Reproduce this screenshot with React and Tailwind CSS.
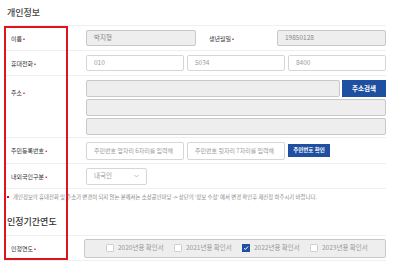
// 개인정보 form (screenshot recreation)
const font = { fontFamily: '"Noto Sans CJK KR", "Noto Sans", sans-serif' };

const Req = () => <span className="text-[#e60012] ml-[1px]">•</span>;

const Label = ({ children, w = "w-[82px]", top = false }) => (
  <div className={`${w} shrink-0 pl-[7px] text-[6px] text-[#333] ${top ? "self-start pt-[8px]" : ""}`}>
    {children}
    <Req />
  </div>
);

const Input = ({ value, placeholder, disabled, w = "w-[98px]", h = "h-[17px]" }) => (
  <div
    className={`${w} ${h} shrink-0 flex items-center px-[7px] rounded-[2px] border whitespace-nowrap overflow-hidden ${
      placeholder ? "text-[6px]" : "text-[6.5px]"
    } ${disabled ? "bg-[#eeeeee] border-[#c8c8c8] text-[#888]" : "bg-white border-[#d6d6d6] text-[#999]"}`}
  >
    {value || placeholder}
  </div>
);

const Check = ({ year, checked }) => (
  <div className="flex items-center w-[68px] shrink-0">
    {checked ? (
      <div className="w-[8px] h-[8px] bg-[#1f4fa0] flex items-center justify-center">
        <svg width="6" height="6" viewBox="0 0 6 6">
          <path d="M1 3.2 L2.4 4.5 L5 1.5" stroke="white" strokeWidth="1" fill="none" />
        </svg>
      </div>
    ) : (
      <div className="w-[8px] h-[8px] bg-white border border-[#d0d0d0] rounded-[1px]" />
    )}
    <span className="ml-[4px] text-[6.5px] text-[#999] whitespace-nowrap">{year}년용 확인서</span>
  </div>
);

export default function App() {
  return (
    <div className="relative w-[399px] h-[272px] bg-white overflow-hidden" style={font}>
      <div className="h-[25px] flex items-center pl-[7px] text-[9px] text-[#444] font-medium">개인정보</div>

      <div className="ml-[4px] w-[382px]">
        {/* 이름 / 생년월일 */}
        <div className="h-[25px] flex items-center border-t border-[#efefef]">
          <Label>이름</Label>
          <Input value="박지형" disabled w="w-[110px]" h="h-[16px]" />
          <div className="w-[6px]" />
          <Label w="w-[75px]">생년월일</Label>
          <Input value="19850128" disabled w="w-[109px]" h="h-[16px]" />
        </div>

        {/* 휴대전화 */}
        <div className="h-[25px] flex items-center gap-[3px] border-t border-[#efefef]">
          <div className="-mr-[3px] flex"><Label>휴대전화</Label></div>
          <Input value="010" h="h-[16px]" />
          <Input value="5034" h="h-[16px]" />
          <Input value="8400" h="h-[16px]" />
        </div>

        {/* 주소 */}
        <div className="h-[62px] flex items-start pt-[4px] border-t border-[#efefef]">
          <Label top>주소</Label>
          <div className="flex flex-col gap-[2px]">
            <div className="flex gap-[2px]">
              <Input disabled w="w-[254px]" />
              <div className="w-[44px] h-[17px] bg-[#1f4fa0] text-white text-[6.5px] font-bold flex items-center justify-center">
                주소검색
              </div>
            </div>
            <Input disabled w="w-[300px]" />
            <Input disabled w="w-[300px]" />
          </div>
        </div>

        {/* 주민등록번호 */}
        <div className="h-[26px] flex items-center gap-[3px] border-t border-[#efefef]">
          <div className="-mr-[3px] flex"><Label>주민등록번호</Label></div>
          <Input placeholder="주민번호 앞자리 6자리를 입력해" h="h-[18px]" />
          <Input placeholder="주민번호 뒷자리 7자리를 입력해" h="h-[18px]" />
          <div className="w-[42px] h-[13px] bg-[#1f4fa0] text-white text-[5.5px] font-bold flex items-center justify-center whitespace-nowrap">
            주민번호 확인
          </div>
        </div>

        {/* 내외국인구분 */}
        <div className="h-[25px] flex items-center border-t border-[#efefef]">
          <Label>내외국인구분</Label>
          <div className="w-[61px] h-[17px] flex items-center justify-between px-[7px] rounded-[2px] border border-[#d6d6d6] text-[6.5px] text-[#999]">
            <span>내국인</span>
            <svg width="5" height="4" viewBox="0 0 5 4">
              <path d="M0.5 1 L2.5 3 L4.5 1" stroke="#aaa" strokeWidth="0.7" fill="none" />
            </svg>
          </div>
        </div>

        {/* notice */}
        <div className="h-[17px] flex items-center border-t border-[#efefef] pl-[3px]">
          <div className="w-[2px] h-[2px] bg-[#e60012]" />
          <span className="ml-[4px] text-[5.4px] text-[#888] whitespace-nowrap">
            개인정보의 휴대전화 및 주소가 변경이 되지 않는 분께서는 소상공인마당 -&gt; 상단의 '정보 수정' 에서 변경 확인후 재신청 하주시기 바랍니다.
          </span>
        </div>
      </div>

      <div className="h-[30px] flex items-center pl-[7px] pt-[4px] text-[9px] text-[#333] font-medium">인정기간연도</div>

      <div className="ml-[4px] w-[382px]">
        <div className="h-[26px] flex items-center border-t border-b border-[#efefef]">
          <Label w="w-[80px]">인정연도</Label>
          <div className="w-[302px] h-[19px] flex items-center pl-[21px] rounded-[2px] border border-[#c8c8c8] bg-[#eeeeee]">
            <Check year="2020" />
            <Check year="2021" />
            <Check year="2022" checked />
            <Check year="2023" />
          </div>
        </div>
      </div>

      {/* annotation box */}
      <div className="absolute left-[4px] top-[26px] w-[64px] h-[234px] border-2 border-[#e0141e]" />
    </div>
  );
}
